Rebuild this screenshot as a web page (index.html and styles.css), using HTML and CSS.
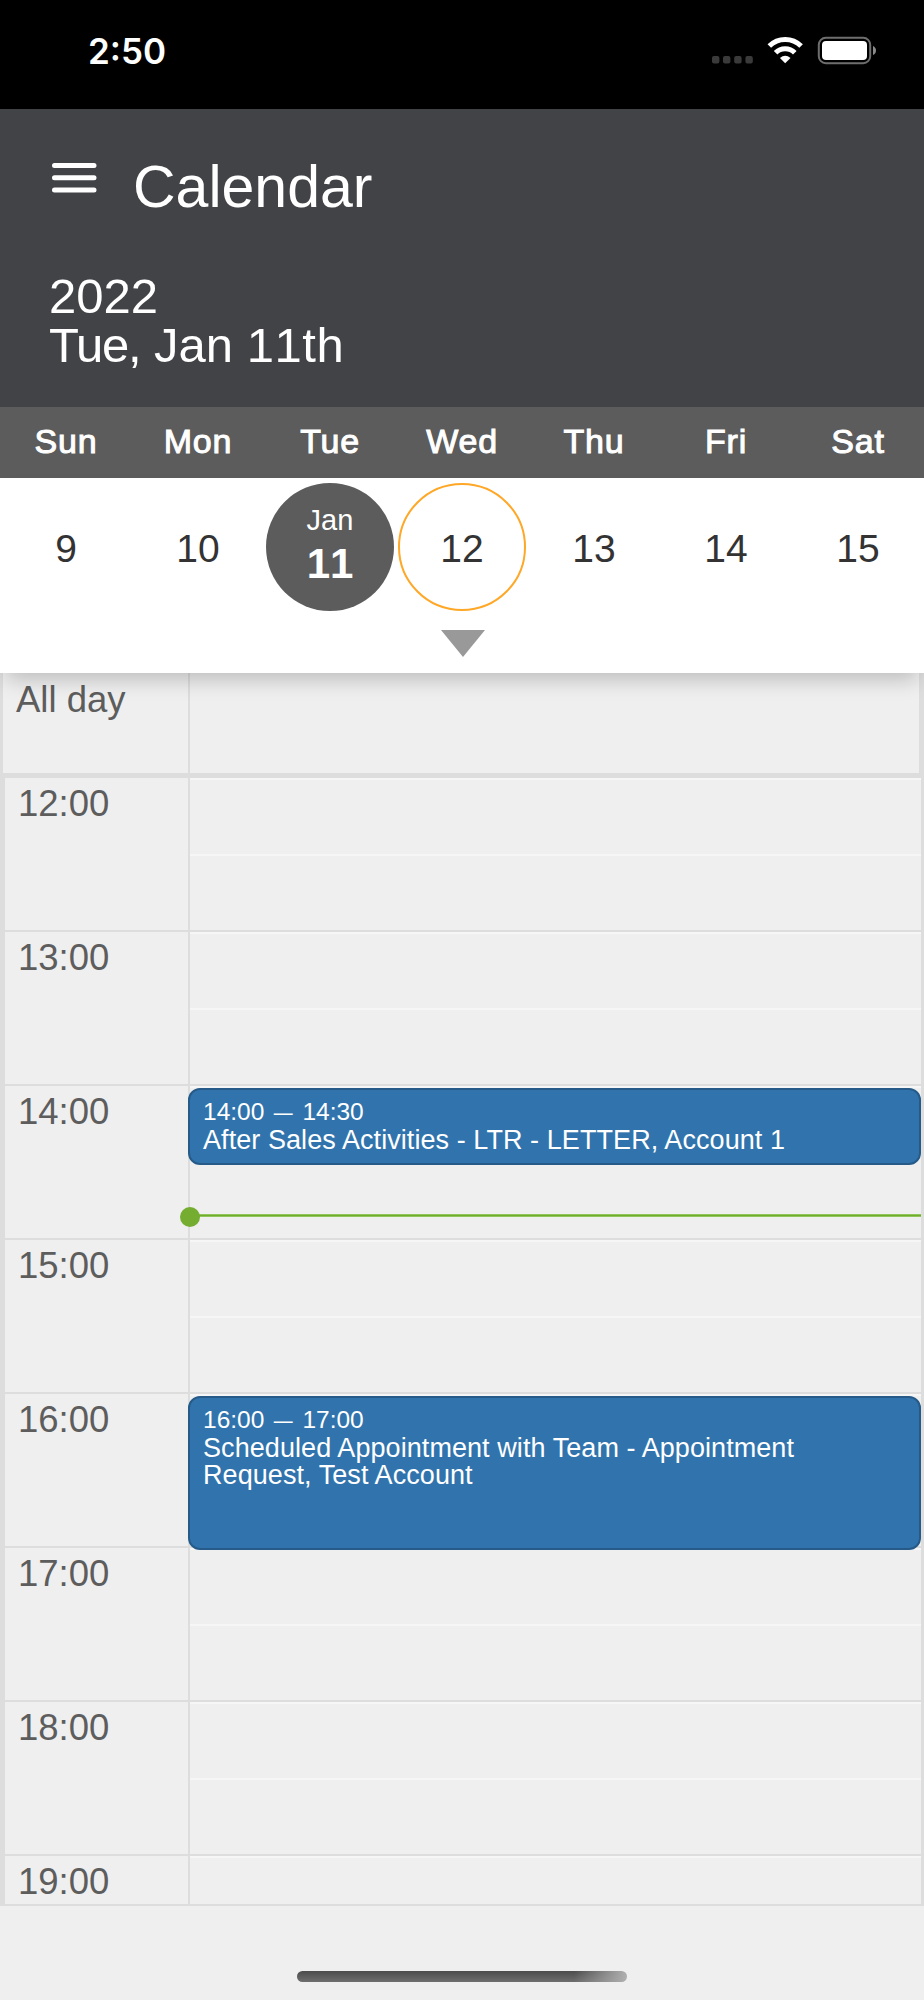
FILE: index.html
```html
<!DOCTYPE html>
<html lang="en">
  <head>
    <meta charset="UTF-8" />
    <meta name="viewport" content="width=device-width, initial-scale=1.0" />
    <title>Calendar</title>
    <link rel="stylesheet" href="styles.css">
  </head>
  <body>
    <div class="status-bar">
      <span class="clock">2:50</span>
      <svg class="status-icons" width="166" height="30" viewBox="0 0 166 30">
        <g fill="#3a3a3a">
          <rect x="2" y="20" width="7.4" height="7.4" rx="2" />
          <rect x="13" y="20" width="7.4" height="7.4" rx="2" />
          <rect x="24.2" y="20" width="7.4" height="7.4" rx="2" />
          <rect x="35.4" y="20" width="7.4" height="7.4" rx="2" />
        </g>
        <g fill="none" stroke="#fff" stroke-width="5">
          <path d="M59.3 10.1 A22.5 22.5 0 0 1 91.1 10.1" />
          <path d="M65.6 16.8 A13.4 13.4 0 0 1 84.8 16.8" />
        </g>
        <path d="M69.9 21.9 Q75.2 17.6 80.5 21.9 L75.2 27.3 Z" fill="#fff" />
        <rect x="108.8" y="1.8" width="51.4" height="25.4" rx="7" fill="none" stroke="#6e6e6e" stroke-width="2" />
        <rect x="112" y="5" width="45" height="19" rx="4" fill="#fff" />
        <path d="M163 10 Q166 11.500 166 14.500 Q166 17.500 163 19 Z" fill="#8a8a8a" />
      </svg>
    </div>

    <div class="header">
      <div class="title-row">
        <svg class="menu" width="46" height="32" viewBox="0 0 46 32">
          <path d="M3.500 3.500 H43 M3.500 15.700 H43 M3.500 28 H43" stroke="#fff" stroke-width="5" stroke-linecap="round" />
        </svg>
        <h1>Calendar</h1>
      </div>
      <div class="current-date">
        <div>2022</div>
        <div><span class="weekday">Tue,</span> Jan <span class="date">11th</span></div>
      </div>
    </div>

    <div class="weekdays">
      <span>Sun</span>
      <span>Mon</span>
      <span>Tue</span>
      <span>Wed</span>
      <span>Thu</span>
      <span>Fri</span>
      <span>Sat</span>
    </div>

    <div class="week">
      <div class="days">
        <div class="day">9</div>
        <div class="day">10</div>
        <div class="day selected">
          <span class="month">Jan</span>
          <span class="number">11</span>
        </div>
        <div class="day today">12</div>
        <div class="day">13</div>
        <div class="day">14</div>
        <div class="day">15</div>
      </div>
      <div class="expand"></div>
    </div>

    <div class="all-day">
      <div class="label">All day</div>
    </div>

    <div class="hours">
      <div class="hour">
        <div class="label">12:00</div>
        <div class="slot"></div>
      </div>
      <div class="hour">
        <div class="label">13:00</div>
        <div class="slot"></div>
      </div>
      <div class="hour">
        <div class="label">14:00</div>
        <div class="slot plain">
          <div class="event half">
            <div class="time">14:00 <span class="dash">—</span> 14:30</div>
            <div class="name">After Sales Activities - LTR - LETTER, Account 1</div>
          </div>
          <div class="now"></div>
        </div>
      </div>
      <div class="hour">
        <div class="label">15:00</div>
        <div class="slot"></div>
      </div>
      <div class="hour">
        <div class="label">16:00</div>
        <div class="slot">
          <div class="event">
            <div class="time">16:00 <span class="dash">—</span> 17:00</div>
            <div class="name appointment">Scheduled Appointment with Team - Appointment Request, Test Account</div>
          </div>
        </div>
      </div>
      <div class="hour">
        <div class="label">17:00</div>
        <div class="slot"></div>
      </div>
      <div class="hour">
        <div class="label">18:00</div>
        <div class="slot"></div>
      </div>
      <div class="hour last">
        <div class="label">19:00</div>
        <div class="slot"></div>
      </div>
    </div>

    <div class="home-indicator"></div>
  </body>
</html>
```

FILE: styles.css
```css
* {
  box-sizing: border-box;
}

body {
  margin: 0;
  height: 2000px;
  overflow: hidden;
  font-family: "Liberation Sans", Arial, sans-serif;
  background-color: #efefef;
  color: #5d5d5d;
}

.status-bar {
  display: flex;
  justify-content: space-between;
  height: 108.5px;
  padding: 36px 48px 0 88px;
  background-color: black;
  color: white;
}

.clock {
  font-family: Inter, sans-serif;
  font-size: 35px;
  font-weight: 600;
  line-height: 30px;
}

.header {
  height: 298px;
  padding: 44px 48px 0 49px;
  background-color: #424347;
  color: white;
}

.title-row {
  display: flex;
  height: 119px;
}

.menu {
  margin: 9px 0 0 2px;
}

h1 {
  margin: 0 0 0 36px;
  font-size: 59px;
  font-weight: normal;
  line-height: 68px;
}

.current-date {
  font-size: 49px;
  line-height: 49px;
}

.weekday {
  letter-spacing: -1.2px;
}

.date {
  font-kerning: none;
  letter-spacing: 0.6px;
}

.weekdays {
  display: grid;
  grid-template-columns: repeat(7, 1fr);
  height: 71.5px;
  background-color: #5c5c5c;
  color: white;
  font-size: 34px;
  line-height: 68px;
  letter-spacing: 0.8px;
  text-align: center;
  -webkit-text-stroke: 1px white;
}

.week {
  position: relative;
  height: 195px;
  padding-top: 5px;
  background-color: white;
  box-shadow: 0 12px 20px -6px rgba(0, 0, 0, 0.22);
}

.days {
  display: grid;
  grid-template-columns: repeat(7, 1fr);
  justify-items: center;
}

.day {
  display: flex;
  flex-direction: column;
  align-items: center;
  justify-content: center;
  width: 128px;
  height: 128px;
  padding-top: 3px;
  color: #333;
  font-size: 39px;
  font-kerning: none;
}

.selected {
  padding: 0 0 10px;
  border-radius: 50%;
  background-color: #5c5c5c;
  color: white;
}

.month {
  font-size: 29px;
  line-height: 42px;
}

.number {
  font-size: 42px;
  font-weight: bold;
  line-height: 45px;
}

.today {
  border: 2px solid #ffa726;
  border-radius: 50%;
}

.expand {
  width: 0;
  margin: 19px 0 0 441px;
  border-left: 22px solid transparent;
  border-right: 22px solid transparent;
  border-top: 27px solid #999;
}

.all-day {
  height: 105px;
  border: solid #ddd;
  border-width: 0 5px 5px 3px;
}

.label {
  width: 187px;
  padding-left: 13px;
  border-right: 2px solid #ddd;
  font-size: 36.5px;
  line-height: 52px;
  font-kerning: none;
}

.all-day .label {
  height: 100px;
  padding-top: 1px;
}

.hours {
  border: solid #ddd;
  border-width: 0 3px 0 5px;
}

.hour {
  display: flex;
  height: 154px;
  border-bottom: 2px solid #ddd;
}

.hour .label {
  width: 185px;
}

.slot {
  position: relative;
  flex: 1;
  border-top: 2px solid #f6f6f6;
}

/* half-hour line */
.slot::before {
  content: "";
  display: block;
  height: 74px;
  border-bottom: 2px solid #f6f6f6;
}

.slot.plain::before {
  display: none;
}

.hour.last {
  height: 50px;
  margin-left: -5px;
  padding-left: 5px;
}

.last .slot::before {
  display: none;
}

.event {
  position: absolute;
  top: 0;
  left: -2px;
  right: 0;
  z-index: 1;
  height: 154px;
  padding: 7px 13px;
  border: 2px solid #265a88;
  border-radius: 12px;
  background-color: #3174ad;
  color: white;
}

.event.half {
  height: 77px;
}

.time {
  font-size: 24.5px;
  line-height: 30px;
  font-kerning: none;
}

.dash {
  display: inline-block;
  transform: scaleX(0.77);
}

.name {
  font-size: 27px;
  line-height: 27.2px;
  letter-spacing: 0.07px;
}

.appointment {
  width: 640px;
}

.now {
  position: absolute;
  top: 126px;
  left: 0;
  right: 0;
  height: 3px;
  border: solid #8fc55a;
  border-width: 1px 0;
  background-color: #6fad2b;
}

.now::before {
  content: "";
  position: absolute;
  top: -8px;
  left: -10px;
  width: 20px;
  height: 20px;
  border-radius: 50%;
  background-color: #75ad31;
}

.home-indicator {
  width: 330px;
  height: 11px;
  margin: 65px auto 0;
  border-radius: 6px;
  background: linear-gradient(to right, rgba(176, 176, 176, 0) 84%, #b0b0b0), linear-gradient(#4c4c4c, #6e6e6e);
}
```
